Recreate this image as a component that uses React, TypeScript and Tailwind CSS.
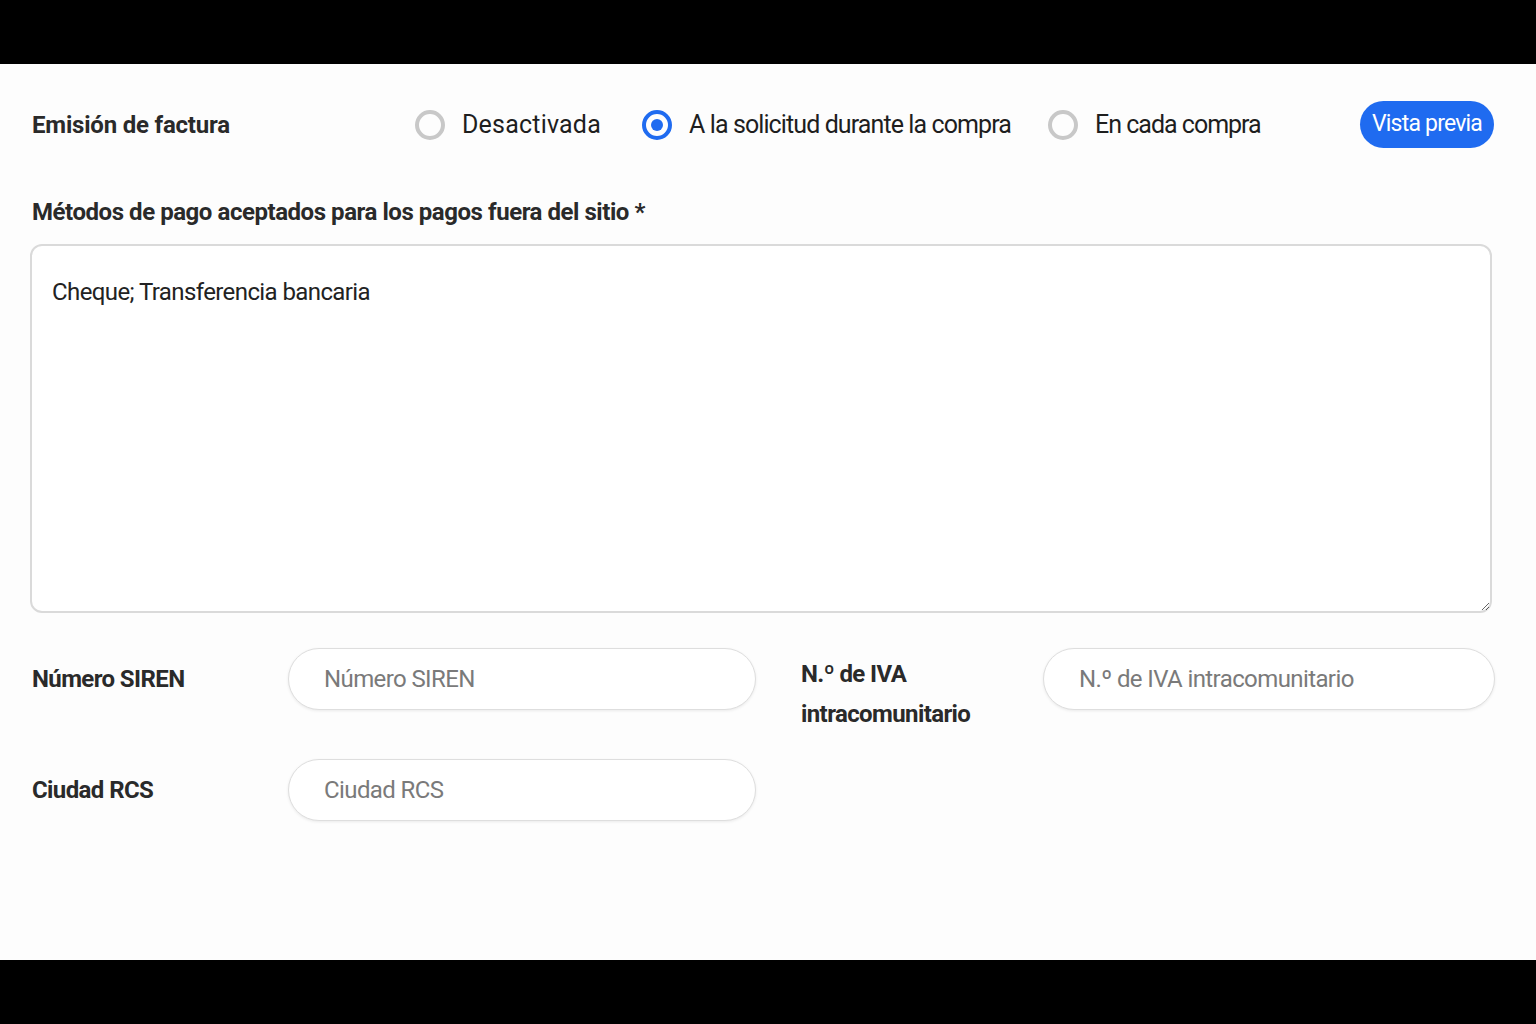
import { useState } from "react";

const font = { fontFamily: 'Roboto, "Liberation Sans", sans-serif' };

type Option = { id: string; label: string; width: string; tracking: string };

const invoiceOptions: Option[] = [
  { id: "off", label: "Desactivada", width: "w-[227px]", tracking: "tracking-[0.2px]" },
  { id: "request", label: "A la solicitud durante la compra", width: "w-[406px]", tracking: "tracking-[-0.9px]" },
  { id: "always", label: "En cada compra", width: "w-[240px]", tracking: "tracking-[-1px]" },
];

function Radio({ checked }: { checked: boolean }) {
  return checked ? (
    <span className="flex h-[30px] w-[30px] shrink-0 items-center justify-center rounded-full border-[4px] border-[#1f6bf0]">
      <span className="h-[12px] w-[12px] rounded-full bg-[#1f6bf0]" />
    </span>
  ) : (
    <span className="h-[30px] w-[30px] shrink-0 rounded-full border-[4px] border-[#c8c8c8]" />
  );
}

function TextField({ placeholder }: { placeholder: string }) {
  return (
    <input
      placeholder={placeholder}
      className="h-[62px] w-full rounded-full border border-[#dedede] bg-white px-[35px] text-[24px] tracking-[-0.6px] text-[#222] shadow-[0_1px_3px_rgba(0,0,0,0.08)] outline-none placeholder:text-[#7a7a7a]"
      style={font}
    />
  );
}

export default function App() {
  const [invoice, setInvoice] = useState("request");

  return (
    <div className="flex h-[1024px] w-[1536px] flex-col bg-black" style={font}>
      <div className="h-[64px]" />
      <div className="flex h-[896px] flex-col bg-[#fdfdfd] px-[30px] text-[#222]">
        {/* Invoice emission */}
        <div className="mt-[37px] flex h-[47px] items-center whitespace-nowrap">
          <span className="ml-[2px] w-[383px] text-[24px] font-bold tracking-[-0.2px] text-[#2a2a2a]">
            Emisión de factura
          </span>
          <div className="flex items-center">
            {invoiceOptions.map((o) => (
              <button
                key={o.id}
                onClick={() => setInvoice(o.id)}
                className={`flex items-center gap-[17px] ${o.width}`}
              >
                <Radio checked={invoice === o.id} />
                <span className={`text-[25px] text-[#1e1e1e] ${o.tracking}`}>{o.label}</span>
              </button>
            ))}
          </div>
          <button className="ml-auto mr-[12px] h-[47px] w-[134px] rounded-full bg-[#1f6bf0] text-[23px] tracking-[-0.8px] text-white">
            Vista previa
          </button>
        </div>

        {/* Offsite payment methods */}
        <label className="ml-[2px] mt-[46px] whitespace-nowrap text-[24px] font-bold tracking-[-0.45px] text-[#2a2a2a]">
          Métodos de pago aceptados para los pagos fuera del sitio *
        </label>
        <textarea
          defaultValue="Cheque; Transferencia bancaria"
          className="mt-[14px] h-[369px] w-[1462px] resize rounded-[12px] border-2 border-[#dadada] bg-white px-[20px] py-[30px] text-[24px] leading-[32px] tracking-[-0.6px] text-[#222] outline-none"
          style={font}
        />

        {/* Company identifiers */}
        <div className="mt-[35px] grid grid-cols-[258px_468px_45px_242px_452px] items-start">
          <span className="ml-[2px] flex h-[62px] items-center text-[24px] font-bold tracking-[-0.6px] text-[#2a2a2a]">
            Número SIREN
          </span>
          <TextField placeholder="Número SIREN" />
          <span />
          <span className="pt-[6px] text-[24px] font-bold leading-[40px] tracking-[-0.6px] text-[#2a2a2a]">
            N.º de IVA
            <br />
            intracomunitario
          </span>
          <TextField placeholder="N.º de IVA intracomunitario" />
        </div>
        <div className="mt-[25px] grid grid-cols-[258px_468px] items-start">
          <span className="ml-[2px] flex h-[62px] items-center text-[24px] font-bold tracking-[-0.6px] text-[#2a2a2a]">
            Ciudad RCS
          </span>
          <TextField placeholder="Ciudad RCS" />
        </div>
      </div>
      <div className="flex-1" />
    </div>
  );
}
